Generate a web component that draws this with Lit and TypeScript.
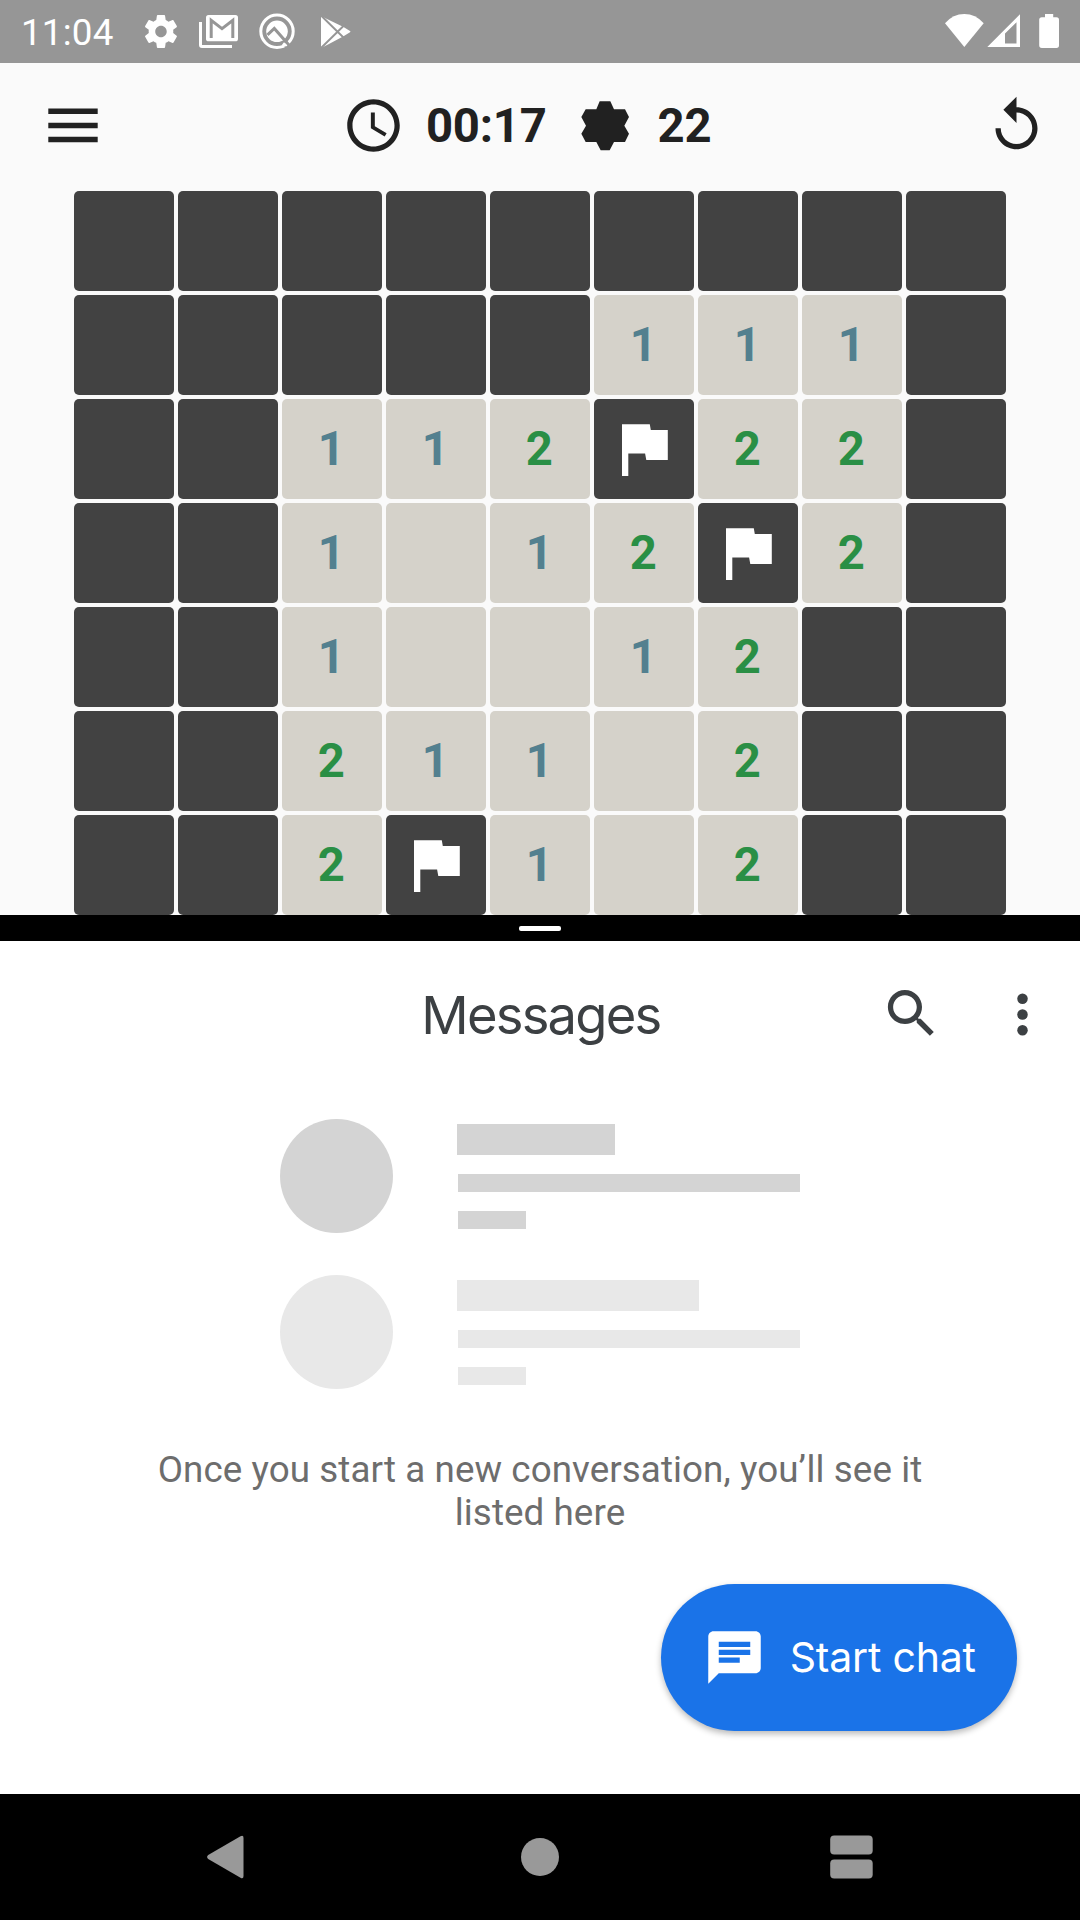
import { LitElement, html, css, nothing } from "lit";
import { customElement, property } from "lit/decorators.js";

// One character per cell: "#" covered, "F" flagged, "." empty, digit = adjacent mines.
const BOARD = [
  "#########",
  "#####111#",
  "##112F22#",
  "##1.12F2#",
  "##1..12##",
  "##211.2##",
  "##2F1.2##",
];

@customElement("status-bar")
export class StatusBar extends LitElement {
  static styles = css`
    :host {
      display: flex;
      align-items: center;
      height: 63px;
      box-sizing: border-box;
      padding: 0 21px 0 21px;
      background: #969696;
      color: #fff;
      font-family: Roboto, sans-serif;
    }
    .clock { font-size: 36.75px; line-height: 43px; padding-top: 2px; width: 124px; letter-spacing: 0.2px; }
    .icons { display: block; flex: none; }
    .right { margin-left: auto; }
  `;
  render() {
    return html`
      <span class="clock">11:04</span>
      <svg class="icons" width="215" height="63" viewBox="145 0 215 63" fill="#fff">
        <g transform="translate(141.3 11.8) scale(1.64)">
          <path d="M19.43 12.98c.04-.32.07-.64.07-.98s-.03-.66-.07-.98l2.11-1.65c.19-.15.24-.42.12-.64l-2-3.46c-.12-.22-.39-.3-.61-.22l-2.49 1c-.52-.4-1.08-.73-1.69-.98l-.38-2.65C14.46 2.18 14.25 2 14 2h-4c-.25 0-.46.18-.49.42l-.38 2.65c-.61.25-1.17.59-1.69.98l-2.49-1c-.23-.09-.49 0-.61.22l-2 3.46c-.13.22-.07.49.12.64l2.11 1.65c-.04.32-.07.65-.07.98s.03.66.07.98l-2.11 1.65c-.19.15-.24.42-.12.64l2 3.46c.12.22.39.3.61.22l2.49-1c.52.4 1.08.73 1.69.98l.38 2.65c.03.24.24.42.49.42h4c.25 0 .46-.18.49-.42l.38-2.65c.61-.25 1.17-.59 1.69-.98l2.49 1c.23.09.49 0 .61-.22l2-3.46c.12-.22.07-.49-.12-.64l-2.11-1.65zM12 15.5c-1.93 0-3.5-1.57-3.5-3.5s1.57-3.5 3.5-3.5 3.5 1.57 3.5 3.5-1.57 3.5-3.5 3.5z" />
        </g>
        <path d="M199 22h3v23h30v3h-30q-3 0-3-3z" />
        <rect x="206" y="15" width="32" height="26.3" rx="2.6" />
        <path d="M211.2 38V20.300L222 28.600 232.800 20.300V38" fill="none" stroke="#969696" stroke-width="3" />
        <circle cx="277" cy="31.300" r="16.200" fill="none" stroke="#fff" stroke-width="3" />
        <circle cx="277" cy="31.300" r="10.800" />
        <path d="M267.500 34.800l6.800-6.300 15.500 17.500" fill="none" stroke="#969696" stroke-width="3" />
        <path d="M282.500 43l3.600 5" stroke="#969696" stroke-width="1" />
        <path d="M283 43.500l2.500 2.200" stroke="#fff" stroke-width="3" />
        <path d="M321 16l7 3.500 15.500 7.500 6.500 4q1 .6 0 1.200l-6.500 4L328 44.500 321 48z" />
        <path d="M320.500 15l25 24.500M320.500 48.500L345.500 24" stroke="#969696" stroke-width="1.900" />
      </svg>
      <svg class="icons right" width="115" height="63" viewBox="944 0 115 63" fill="#fff">
        <path d="M964.300 47L945 23.200Q953 14 964.300 14t19.400 9.200z" />
        <path fill-rule="evenodd" d="M987.300 47L1020 14.300V47zM1005 43.500h11.500V22.200L1005 33.500z" />
        <path d="M1045 14h8.200v3.300h3.300q2.500 0 2.500 2.500v25.500q0 2.600-2.500 2.600h-14.700q-2.600 0-2.600-2.600V19.800q0-2.500 2.600-2.500h3.200z" />
      </svg>
    `;
  }
}

@customElement("mine-field")
export class MineField extends LitElement {
  static styles = css`
    :host {
      display: grid;
      grid-template-columns: repeat(9, 99.625px);
      grid-auto-rows: 99.625px;
      gap: 4.375px;
      padding-left: 74px;
      font: 700 47.25px/101px Roboto, sans-serif;
      text-align: center;
    }
    .cell { border-radius: 5px; background: #424242; }
    .open { background: #d5d2ca; }
    .n1 { color: #53808f; }
    .n2 { color: #2a8f45; }
    .num { display: block; margin-left: -1px; }
    .flag { display: block; }
  `;
  private cell(c: string) {
    if (c === "#") return html`<div class="cell"></div>`;
    if (c === "F")
      return html`<div class="cell">
        <svg class="flag" width="99.6" height="99.6" viewBox="0 0 99.6 99.6">
          <path fill="#fff" d="M28 25.300h27.800l1 5.700h17v30H52.300l-1.200-6.600H34.300V77H28z" />
        </svg>
      </div>`;
    return html`<div class="cell open">
      ${c === "." ? nothing : html`<span class="num n${c}">${c}</span>`}
    </div>`;
  }
  render() {
    return BOARD.map((row) => [...row].map((c) => this.cell(c)));
  }
}

@customElement("mines-game")
export class MinesGame extends LitElement {
  static styles = css`
    :host { display: block; height: 852px; overflow: hidden; background: #fafafa; color: #212121; }
    .bar {
      display: flex;
      align-items: center;
      height: 128px;
      box-sizing: border-box;
      padding: 0 32px 3px 48px;
    }
    .bar svg { display: block; flex: none; fill: #212121; }
    .value { font: 700 47.25px/55px Roboto, sans-serif; padding-top: 1px; }
    .timer { margin-left: 244px; }
    .time { margin-left: 21px; width: 121px; letter-spacing: -0.25px; }
    .mine { margin-left: 33.500px; }
    .left { margin-left: 29px; }
    .again { margin-left: auto; }
  `;
  render() {
    return html`
      <div class="bar">
        <svg width="50" height="35" viewBox="48 108.500 50 35">
          <path d="M48.300 109h49.400v5.400H48.300zM48.300 123.200h49.400v5.500H48.300zM48.300 137.300h49.400v5.500H48.300z" />
        </svg>
        <svg class="timer" width="63" height="63" viewBox="0 0 24 24">
          <path d="M11.990 2C6.470 2 2 6.480 2 12s4.470 10 9.990 10C17.520 22 22 17.520 22 12S17.520 2 11.990 2zM12 20c-4.420 0-8-3.580-8-8s3.580-8 8-8 8 3.580 8 8-3.580 8-8 8z" />
          <path d="M12.500 7H11v6l5.250 3.150.75-1.230-4.500-2.670z" />
        </svg>
        <span class="value time">00:17</span>
        <svg class="mine" width="48" height="50" viewBox="751 92 144 150">
          <path d="M807 93H839L850 117H883L895 140 881 166 895 190 883 215H850L837 240H810L797 215H765L752 190 766 166 752 140 765 117H797z" />
        </svg>
        <span class="value left">22</span>
        <svg class="again" width="63" height="63" viewBox="0 0 24 24">
          <path d="M12 5V1L7 6l5 5V7c3.310 0 6 2.690 6 6s-2.690 6-6 6-6-2.690-6-6H4c0 4.420 3.580 8 8 8s8-3.580 8-8-3.580-8-8-8z" />
        </svg>
      </div>
      <mine-field></mine-field>
    `;
  }
}

@customElement("skeleton-row")
export class SkeletonRow extends LitElement {
  @property({ type: Number }) lead = 158;
  static styles = css`
    :host { display: flex; height: 114px; color: #d4d4d4; }
    :host([faint]) { color: #e8e8e8; }
    .avatar { width: 113px; height: 114px; border-radius: 50%; background: currentColor; }
    .lines { margin: 5px 0 0 64px; }
    .line { height: 18px; margin-left: 1px; background: currentColor; }
    .title { height: 31px; margin-left: 0; }
    .body { width: 342px; margin-top: 19px; }
    .tail { width: 68px; margin-top: 19px; }
  `;
  render() {
    return html`
      <div class="avatar"></div>
      <div class="lines">
        <div class="line title" style="width:${this.lead}px"></div>
        <div class="line body"></div>
        <div class="line tail"></div>
      </div>
    `;
  }
}

@customElement("messages-pane")
export class MessagesPane extends LitElement {
  static styles = css`
    :host {
      display: flex;
      flex-direction: column;
      height: 853px;
      background: #fff;
      color: #3c4043;
    }
    .head {
      display: grid;
      grid-template-columns: 1fr auto 1fr;
      align-items: center;
      height: 147px;
    }
    .title {
      grid-column: 2;
      font: 400 52.500px/64px Inter, sans-serif;
      letter-spacing: -1.800px;
      margin-right: -1.800px;
    }
    .actions { display: flex; justify-content: flex-end; gap: 48px; padding-right: 26px; }
    svg { display: block; }
    .search { margin-top: -1px; }
    .rows { display: flex; flex-direction: column; gap: 42px; padding: 31px 0 0 280px; }
    .hint {
      margin: 58.500px auto 0;
      width: 800px;
      font: 400 36.75px/43px Roboto, sans-serif;
      letter-spacing: 0.080px;
      text-align: center;
      color: #6d6d6d;
    }
    .fab {
      display: flex;
      align-items: center;
      align-self: flex-end;
      box-sizing: border-box;
      width: 356px;
      height: 147px;
      margin: 50px 63px 0 0;
      padding-left: 41.750px;
      border: 0;
      border-radius: 73.500px;
      background: #1a73e8;
      color: #fff;
      font: 400 41px/50px Inter, sans-serif;
      letter-spacing: -0.200px;
      white-space: nowrap;
      box-shadow: 0 3px 6px rgba(0, 0, 0, 0.28);
    }
    .label { margin-left: 24px; }
  `;
  render() {
    return html`
      <div class="head">
        <span class="title">Messages</span>
        <div class="actions">
          <svg class="search" width="63" height="63" viewBox="0 0 24 24" fill="#3c4043">
            <path d="M15.500 14h-.79l-.28-.27C15.410 12.590 16 11.110 16 9.500 16 5.910 13.090 3 9.500 3S3 5.910 3 9.500 5.910 16 9.500 16c1.610 0 3.090-.59 4.230-1.570l.27.28v.79l5 4.990L20.490 19l-4.990-5zm-6 0C7.010 14 5 11.990 5 9.500S7.010 5 9.500 5 14 7.010 14 9.500 11.990 14 9.500 14z" />
          </svg>
          <svg width="63" height="63" viewBox="0 0 24 24" fill="#3c4043">
            <circle cx="12" cy="6" r="2" /><circle cx="12" cy="12" r="2" /><circle cx="12" cy="18" r="2" />
          </svg>
        </div>
      </div>
      <div class="rows">
        <skeleton-row .lead=${158}></skeleton-row>
        <skeleton-row faint .lead=${242}></skeleton-row>
      </div>
      <div class="hint">Once you start a new conversation, you’ll see it listed here</div>
      <button class="fab">
        <svg width="63" height="63" viewBox="0 0 24 24" fill="#fff">
          <path d="M20 2H4c-1.100 0-1.990.9-1.990 2L2 22l4-4h14c1.100 0 2-.9 2-2V4c0-1.100-.9-2-2-2zM6 9h12v2H6V9zm8 5H6v-2h8v2zm4-6H6V6h12v2z" />
        </svg>
        <span class="label">Start chat</span>
      </button>
    `;
  }
}

@customElement("app-root")
export class AppRoot extends LitElement {
  static styles = css`
    :host { display: block; width: 1080px; height: 1920px; overflow: hidden; background: #000; }
    .divider { display: flex; height: 26px; align-items: center; justify-content: center; background: #000; }
    .grip { width: 42px; height: 5px; border-radius: 2px; background: #fff; }
    .nav { display: grid; grid-template-columns: 1fr auto 1fr; align-items: center; height: 126px; box-sizing: border-box; padding: 0 207px; }
    .nav svg { display: block; fill: #999; }
    .split { justify-self: end; }
  `;
  render() {
    return html`
      <status-bar></status-bar>
      <mines-game></mines-game>
      <div class="divider"><div class="grip"></div></div>
      <messages-pane></messages-pane>
      <div class="nav">
        <svg width="42" height="44" viewBox="0 0 42 44">
          <path d="M33.500 1.200Q36.500-.5 36.500 3V41Q36.500 44.500 33.500 42.800L1.200 24Q-1 22 1.200 20z" />
        </svg>
        <svg width="40" height="40" viewBox="0 0 40 40"><circle cx="20" cy="20" r="19" /></svg>
        <svg class="split" width="43" height="44" viewBox="0 0 43 44">
          <rect x=".2" y=".5" width="42.500" height="19" rx="4" />
          <rect x=".2" y="24.500" width="42.500" height="19" rx="4" />
        </svg>
      </div>
    `;
  }
}
